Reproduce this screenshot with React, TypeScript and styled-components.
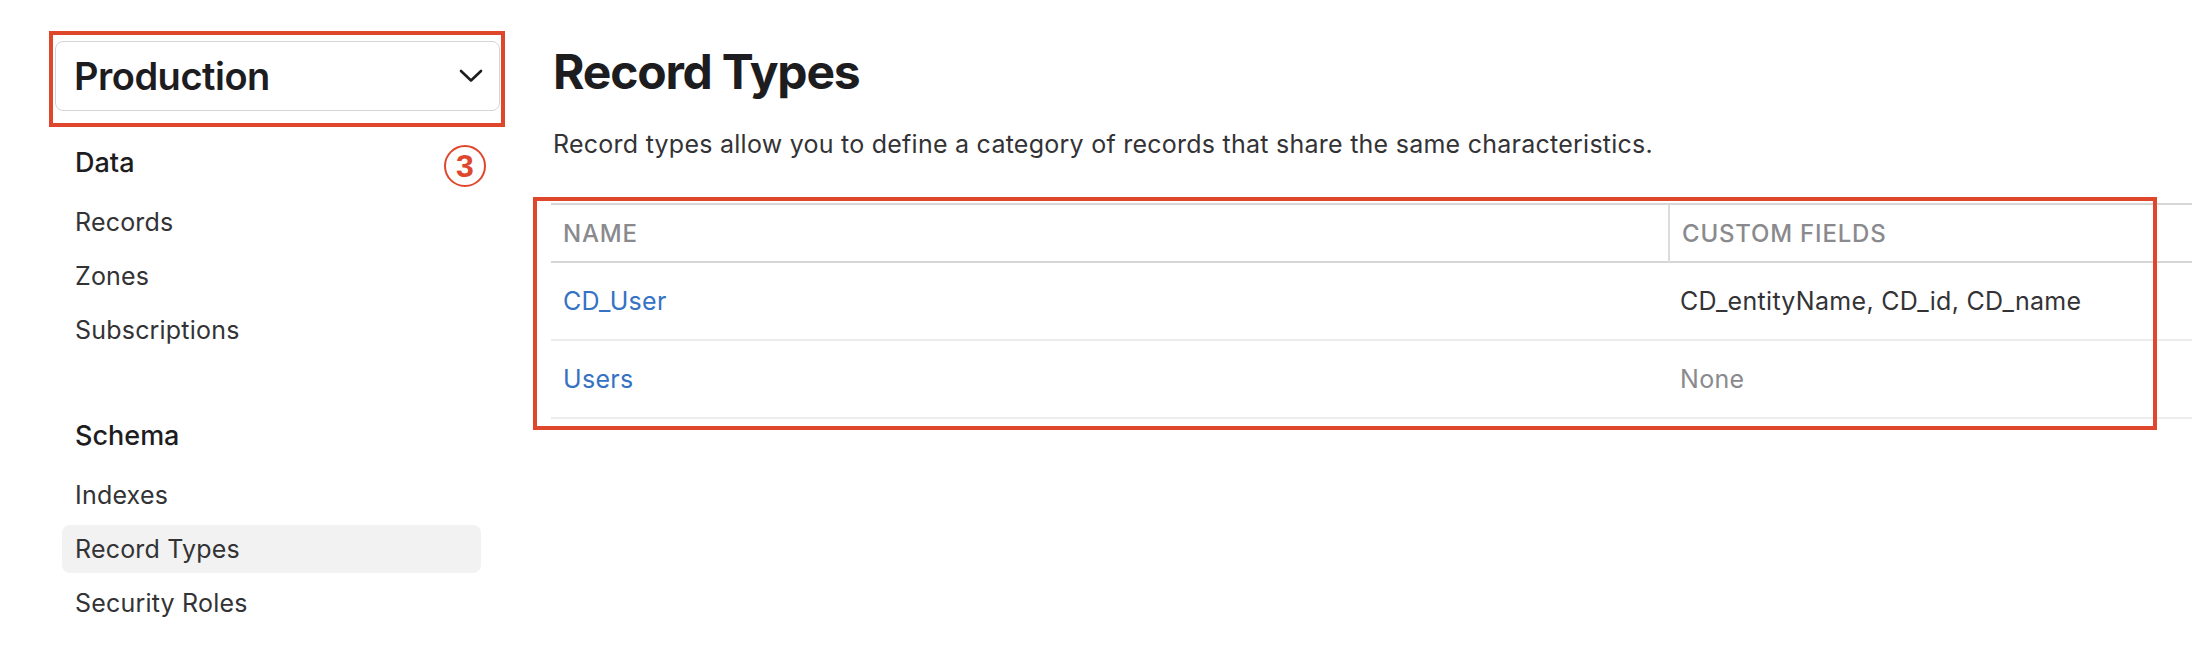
import React from "react";
import styled, { createGlobalStyle } from "styled-components";

const GlobalStyle = createGlobalStyle`
  html, body {
    margin: 0;
    padding: 0;
    background: #ffffff;
  }
  body {
    font-family: Inter, "Noto Sans", "Liberation Sans", sans-serif;
    color: #1d1d1f;
  }
`;

const Page = styled.div`
  display: flex;
  width: 2192px;
  height: 672px;
  overflow: hidden;
  background: #fff;
`;

const Sidebar = styled.aside`
  width: 498px;
  flex-shrink: 0;
  padding: 41px 0 0 55px;
`;

const Annotated = styled.div`
  position: relative;
  width: 445px;
`;

const RedFrame = styled.div<{ $top: number; $left: number; $right: number; $bottom: number }>`
  position: absolute;
  top: ${(p) => p.$top}px;
  left: ${(p) => p.$left}px;
  right: ${(p) => p.$right}px;
  bottom: ${(p) => p.$bottom}px;
  border: 4px solid #df472d;
  pointer-events: none;
`;

const StepBadge = styled.span`
  position: absolute;
  left: 389px;
  top: 104px;
  width: 38px;
  height: 38px;
  border: 2.5px solid #df472d;
  border-radius: 50%;
  display: flex;
  align-items: center;
  justify-content: center;
  color: #df472d;
  font-family: "Liberation Sans", Arial, sans-serif;
  font-weight: 700;
  font-size: 32px;
  line-height: 1;
`;

const Select = styled.button`
  display: flex;
  align-items: center;
  justify-content: space-between;
  box-sizing: border-box;
  width: 445px;
  height: 70px;
  padding: 0 16px 0 18px;
  background: #fff;
  border: 1.5px solid #d5d5d5;
  border-radius: 8px;
  font-family: inherit;
  font-size: 38px;
  font-weight: 600;
  letter-spacing: -0.5px;
  color: #1d1d1f;
`;

const Nav = styled.nav`
  margin: 36px 0 0 7px;
  width: 419px;
`;

const Group = styled.div`
  & + & {
    margin-top: 66px;
  }
`;

const GroupTitle = styled.div`
  padding-left: 13px;
  font-size: 27px;
  line-height: 32px;
  font-weight: 500;
  color: #1d1d1f;
  margin-bottom: 19px;
`;

const NavItem = styled.a<{ $active?: boolean }>`
  display: flex;
  align-items: center;
  height: 48px;
  padding-left: 13px;
  border-radius: 8px;
  font-size: 25px;
  letter-spacing: 0.2px;
  color: #333336;
  background: ${(p) => (p.$active ? "#f2f2f2" : "transparent")};
  & + & {
    margin-top: 6px;
  }
`;

const Main = styled.main`
  flex: 1;
  padding-top: 44px;
`;

const Title = styled.h1`
  margin: 0;
  font-size: 48px;
  line-height: 56px;
  font-weight: 700;
  letter-spacing: -1.2px;
  color: #1d1d1f;
`;

const Lead = styled.p`
  margin: 30px 0 0;
  font-size: 25px;
  line-height: 29px;
  letter-spacing: 0.25px;
  color: #333336;
`;

const TableWrap = styled.div`
  position: relative;
  margin-top: 44px;
  margin-left: -2px;
`;

const Table = styled.div`
  display: grid;
  grid-template-columns: 1117px 1fr;
  border-top: 2px solid #d6d6d6;
`;

const HeadCell = styled.div<{ $divider?: boolean }>`
  height: 56px;
  display: flex;
  align-items: center;
  padding-left: 12px;
  font-size: 24px;
  font-weight: 500;
  letter-spacing: 0.8px;
  color: #8a8a8e;
  border-bottom: 2px solid #d6d6d6;
  border-left: ${(p) => (p.$divider ? "2px solid #dcdcdc" : "none")};
`;

const Cell = styled.div<{ $tone?: "link" | "muted" | "text" }>`
  height: 76px;
  display: flex;
  align-items: center;
  padding-left: 12px;
  font-size: 25px;
  letter-spacing: 0.3px;
  border-bottom: 2px solid #ececec;
  color: ${(p) =>
    p.$tone === "link" ? "#3572c4" : p.$tone === "muted" ? "#8a8a8e" : "#333336"};
`;

const Chevron = () => (
  <svg width="24" height="14" viewBox="0 0 24 14" fill="none">
    <polyline points="2,2 12,11.5 22,2" stroke="#1d1d1f" strokeWidth="2.6" strokeLinecap="round" strokeLinejoin="round" />
  </svg>
);

interface RecordType {
  name: string;
  fields: string | null;
}

const records: Array<RecordType> = [
  { name: "CD_User", fields: "CD_entityName, CD_id, CD_name" },
  { name: "Users", fields: null },
];

export default function App() {
  return (
    <>
      <GlobalStyle />
      <Page>
        <Sidebar>
          <Annotated>
            <Select>
              Production
              <Chevron />
            </Select>
            <RedFrame $top={-10} $left={-6} $right={-5} $bottom={-16} />
            <StepBadge>3</StepBadge>
          </Annotated>
          <Nav>
            <Group>
              <GroupTitle>Data</GroupTitle>
              <NavItem>Records</NavItem>
              <NavItem>Zones</NavItem>
              <NavItem>Subscriptions</NavItem>
            </Group>
            <Group>
              <GroupTitle>Schema</GroupTitle>
              <NavItem>Indexes</NavItem>
              <NavItem $active>Record Types</NavItem>
              <NavItem>Security Roles</NavItem>
            </Group>
          </Nav>
        </Sidebar>
        <Main>
          <Title>Record Types</Title>
          <Lead>Record types allow you to define a category of records that share the same characteristics.</Lead>
          <TableWrap>
            <Table>
              <HeadCell>NAME</HeadCell>
              <HeadCell $divider>CUSTOM FIELDS</HeadCell>
              {records.map((r) => (
                <React.Fragment key={r.name}>
                  <Cell $tone="link">{r.name}</Cell>
                  <Cell $tone={r.fields ? "text" : "muted"}>{r.fields ?? "None"}</Cell>
                </React.Fragment>
              ))}
            </Table>
            <RedFrame $top={-6} $left={-18} $right={35} $bottom={-11} />
          </TableWrap>
        </Main>
      </Page>
    </>
  );
}
